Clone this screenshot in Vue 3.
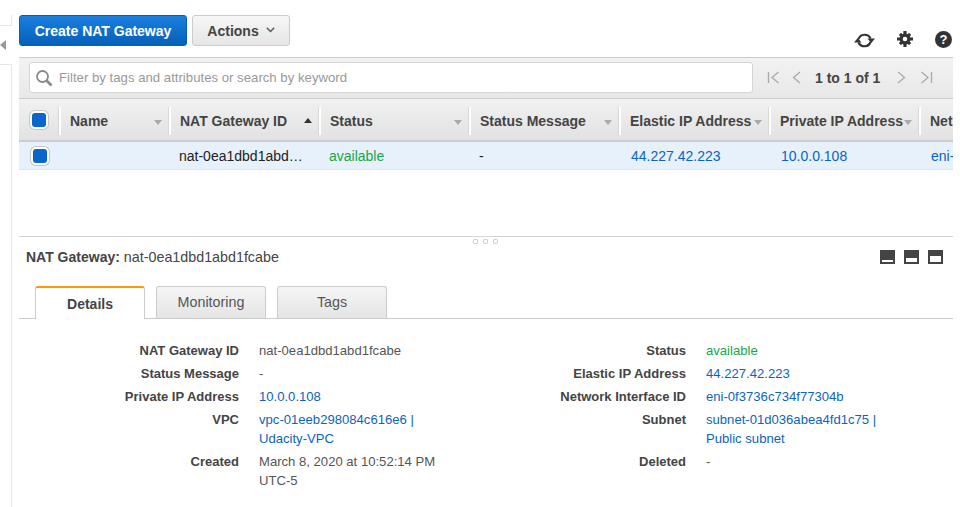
<script setup>
const columns = [
  { label: 'Name', width: 110, sort: 'down' },
  { label: 'NAT Gateway ID', width: 150, sort: 'up' },
  { label: 'Status', width: 150, sort: 'down' },
  { label: 'Status Message', width: 150, sort: 'down' },
  { label: 'Elastic IP Address', width: 150, sort: 'down' },
  { label: 'Private IP Address', width: 150, sort: 'down' },
  { label: 'Net', width: 34, sort: 'none' }
]
const left = [
  { k: 'NAT Gateway ID', v: ['nat-0ea1dbd1abd1fcabe'] },
  { k: 'Status Message', v: ['-'] },
  { k: 'Private IP Address', v: ['10.0.0.108'], link: true },
  { k: 'VPC', v: ['vpc-01eeb298084c616e6 |', 'Udacity-VPC'], link: true },
  { k: 'Created', v: ['March 8, 2020 at 10:52:14 PM', 'UTC-5'] }
]
const right = [
  { k: 'Status', v: ['available'], green: true },
  { k: 'Elastic IP Address', v: ['44.227.42.223'], link: true },
  { k: 'Network Interface ID', v: ['eni-0f3736c734f77304b'], link: true },
  { k: 'Subnet', v: ['subnet-01d036abea4fd1c75 |', 'Public subnet'], link: true },
  { k: 'Deleted', v: ['-'] }
]
</script>

<template>
  <div class="page">
    <aside class="rail">
      <div class="rail-top"></div>
      <div class="rail-arrow"></div>
      <div class="rail-rest"></div>
    </aside>
    <main class="main">
      <div class="toolbar">
        <button class="btn primary">Create NAT Gateway</button>
        <button class="btn secondary">Actions<svg width="9" height="6" viewBox="0 0 9 6" class="caret"><path d="M.8.8 4.5 4.6 8.2.8" fill="none" stroke="#555" stroke-width="1.4"/></svg></button>
        <div class="tools">
          <svg width="21" height="17" viewBox="0 0 21 17">
            <path d="M4.500 7a6.500 6.500 0 0 1 12-.5" fill="none" stroke="#333" stroke-width="2.200"/>
            <path d="M16.500 10a6.500 6.500 0 0 1-12 .5" fill="none" stroke="#333" stroke-width="2.200"/>
            <path d="M13.500 6.500h7.500l-3.700 4.500zM0 10.500h7.500L3.700 6z" fill="#333"/>
          </svg>
          <svg width="16" height="16" viewBox="0 0 16 16">
            <circle cx="8" cy="8" r="3.900" fill="none" stroke="#333" stroke-width="3.200"/>
            <path d="M6.400 0h3.200v3H6.400zM6.400 13h3.200v3H6.400zM0 6.400h3v3.200H0zM13 6.400h3v3.200h-3z" fill="#333"/>
            <path d="M1.800 4 4 1.800 6 4 4 6zM12 1.800 14.200 4 12 6 10 4zM1.800 12 4 10l2 2-2 2.200zM12 10l2.200 2L12 14.200 10 12z" fill="#333"/>
          </svg>
          <span class="help">?</span>
        </div>
      </div>

      <div class="filterbar">
        <div class="search">
          <svg width="18" height="18" viewBox="0 0 18 18">
            <circle cx="7.500" cy="7.500" r="5.500" fill="none" stroke="#888" stroke-width="1.800"/>
            <path d="m11.500 11.500 5 5" stroke="#888" stroke-width="2.600"/>
          </svg>
          <span>Filter by tags and attributes or search by keyword</span>
        </div>
        <div class="pager">
          <svg width="13" height="13" viewBox="0 0 13 13" class="pg1"><path d="M1.500 1v11M11.500 1 5 6.500l6.500 5.500" fill="none" stroke="#aaa" stroke-width="1.300"/></svg>
          <svg width="9" height="13" viewBox="0 0 9 13" class="pg2"><path d="M8 1 1.500 6.500 8 12" fill="none" stroke="#aaa" stroke-width="1.300"/></svg>
          <span class="pg-text">1 to 1 of 1</span>
          <svg width="9" height="13" viewBox="0 0 9 13" class="pg3"><path d="m1 1 6.500 5.500L1 12" fill="none" stroke="#aaa" stroke-width="1.300"/></svg>
          <svg width="13" height="13" viewBox="0 0 13 13" class="pg4"><path d="M11.500 1v11M1.500 1 8 6.500 1.500 12" fill="none" stroke="#aaa" stroke-width="1.300"/></svg>
        </div>
      </div>

      <div class="thead">
        <div class="check-cell"><span class="check"></span></div>
        <div v-for="c in columns" :key="c.label" class="th" :style="{ flexBasis: c.width + 'px' }">
          <span class="th-label">{{ c.label }}</span>
          <span v-if="c.sort !== 'none'" class="sort" :class="c.sort"></span>
        </div>
      </div>
      <div class="trow">
        <div class="check-cell"><span class="check"></span></div>
        <div class="td" style="flex-basis: 110px"></div>
        <div class="td" style="flex-basis: 150px">nat-0ea1dbd1abd…</div>
        <div class="td green" style="flex-basis: 150px">available</div>
        <div class="td" style="flex-basis: 150px">-</div>
        <div class="td link far" style="flex-basis: 150px">44.227.42.223</div>
        <div class="td link far" style="flex-basis: 150px">10.0.0.108</div>
        <div class="td link far" style="flex-basis: 34px">eni-</div>
      </div>

      <div class="split">
        <div class="sash"><i></i><i></i><i></i></div>
        <div class="pane-head">
          <div class="pane-title"><b>NAT Gateway:</b> nat-0ea1dbd1abd1fcabe</div>
          <div class="pane-icons">
            <span class="pi p1"></span><span class="pi p2"></span><span class="pi p3"></span>
          </div>
        </div>
        <div class="tabs">
          <div class="tab active">Details</div>
          <div class="tab">Monitoring</div>
          <div class="tab">Tags</div>
        </div>
        <div class="details">
          <dl class="col">
            <div v-for="r in left" :key="r.k" class="dr">
              <dt>{{ r.k }}</dt>
              <dd :class="{ link: r.link }"><div v-for="l in r.v" :key="l">{{ l }}</div></dd>
            </div>
          </dl>
          <dl class="col col-r">
            <div v-for="r in right" :key="r.k" class="dr">
              <dt>{{ r.k }}</dt>
              <dd :class="{ link: r.link, green: r.green }"><div v-for="l in r.v" :key="l">{{ l }}</div></dd>
            </div>
          </dl>
        </div>
      </div>
    </main>
  </div>
</template>

<style>
html, body { margin: 0; background: #fff; overflow: hidden; }
</style>

<style scoped>
* { box-sizing: border-box; }
.page {
  display: flex;
  width: 960px;
  height: 507px;
  overflow: hidden;
  font-family: "Liberation Sans", Arial, sans-serif;
  font-size: 13px;
  color: #444;
}
.rail { width: 12px; flex: none; margin-right: 7px; display: flex; flex-direction: column; }
.rail-top { margin-top: 15px; height: 11px; border-right: 1px solid #e6e6e6; border-bottom: 1px solid #e6e6e6; }
.rail-arrow { height: 38px; display: flex; align-items: flex-start; padding-top: 14px; }
.rail-arrow::before { content: ""; display: block; width: 0; height: 0; border-top: 5.500px solid transparent; border-bottom: 5.500px solid transparent; border-right: 6px solid #999; }
.rail-rest { flex: 1; border-top: 1px solid #e6e6e6; border-right: 1px solid #e6e6e6; }
.main { width: 934px; flex: none; }
.toolbar { height: 57px; display: flex; align-items: flex-start; padding-top: 15px; gap: 5px; }
.btn { height: 31px; border-radius: 3px; font: bold 14px "Liberation Sans", Arial, sans-serif; padding: 0; }
.primary { width: 168px; color: #fff; border: 1px solid #0b5fb0; background: linear-gradient(#1a7fe0, #0560b8); }
.secondary { width: 98px; color: #444; border: 1px solid #ccc; background: linear-gradient(#f6f6f6, #e6e6e6); display: flex; align-items: center; justify-content: center; gap: 7px; }
.caret { margin-top: -1px; }
.tools { margin-left: auto; display: flex; align-items: center; padding-top: 17px; height: 33px; }
.tools svg:nth-child(1) { margin-right: 22px; }
.tools svg:nth-child(2) { margin-right: 22px; margin-top: -2px; }
.help { width: 17px; height: 17px; margin-right: 1px; margin-top: -2px; border-radius: 50%; background: #333; color: #fff; font-weight: bold; font-size: 13px; line-height: 17px; text-align: center; }
.filterbar {
  height: 42px;
  background: linear-gradient(#f2f2f2, #e8e8e8);
  border-top: 1px solid #ccc;
  border-bottom: 1px solid #ccc;
  display: flex;
  align-items: flex-start;
  padding: 4px 0 0 10px;
}
.search {
  width: 724px; height: 31px; background: #fff;
  border: 1px solid #d5d5d5; border-radius: 3px;
  display: flex; align-items: center; gap: 6px; padding-left: 5px;
  color: #999; font-size: 13.200px;
}
.pager { display: flex; align-items: center; height: 31px; }
.pg1 { margin-left: 14px; }
.pg2 { margin-left: 12px; }
.pg-text { margin-left: 14px; font-weight: bold; font-size: 14px; color: #444; }
.pg3 { margin-left: 17px; }
.pg4 { margin-left: 14px; }
.thead { height: 43px; display: flex; background: linear-gradient(#f1f1f1, #e2e2e2); border-bottom: 2px solid #ccc; overflow: hidden; align-items: center; }
.check-cell { width: 40px; flex: none; display: flex; justify-content: center; padding-left: 1px; }
.thead .check-cell { padding-left: 0; margin-top: 1px; }
.check { width: 14px; height: 14px; margin: 2px 0; border-radius: 3px; background: #0a66c8; box-shadow: 0 0 0 2px #fff, 0 0 0 3px #c8c8c8; }
.th { flex: 0 0 150px; height: 28px; margin-top: 3px; border-left: 2px solid #fff; box-shadow: -1px 0 0 #d8d8d8; display: flex; align-items: center; position: relative; padding-left: 9px; font-weight: bold; font-size: 14px; white-space: nowrap; }
.sort { position: absolute; right: 7px; top: 13px; border: 4px solid transparent; border-top: 5px solid #aaa; border-bottom: 0; }
.sort.up { border-top: 0; border-bottom: 5px solid #333; top: 11px; }
.trow { height: 28px; display: flex; align-items: center; background: #e7f1fc; border-bottom: 1px solid #dde6ef; overflow: hidden; color: #222; font-size: 14px; white-space: nowrap; }
.td { flex: 0 0 150px; padding-left: 10px; overflow: hidden; }
.td.far { padding-left: 12px; }
.green { color: #14a848; }
.link { color: #0b63c1; }
.split { margin-top: 66px; border-top: 1px solid #d4d4d4; position: relative; }
.sash { position: absolute; top: 2px; left: 454px; display: flex; gap: 5px; }
.sash i { width: 5px; height: 5px; border: 1px solid #c8c8c8; border-radius: 1.500px; }
.pane-head { height: 39px; display: flex; align-items: center; justify-content: space-between; padding: 0 10px 0 7px; }
.pane-title { font-size: 14.300px; color: #444; white-space: nowrap; }
.pane-title b { font-size: 14px; }
.pane-icons { display: flex; gap: 9px; }
.pi { width: 15px; height: 14px; background: #444; position: relative; }
.pi::after { content: ""; position: absolute; left: 2px; right: 2px; bottom: 2px; background: #fff; }
.p1::after { height: 2px; }
.p2::after { height: 4px; }
.p3::after { height: 6px; }
.tabs { height: 35px; border-bottom: 1px solid #ccc; display: flex; align-items: flex-end; gap: 11px; padding-left: 16px; margin-top: 8px; }
.tab { width: 110px; height: 32px; border: 1px solid #ccc; border-bottom: 0; border-radius: 3px 3px 0 0; background: linear-gradient(#f5f5f5, #e5e5e5); text-align: center; line-height: 30px; font-size: 14.300px; color: #555; }
.tab.active { height: 33px; margin-bottom: -1px; background: #fff; border-top: 2px solid #f90; font-weight: bold; font-size: 14px; color: #444; line-height: 32px; }
.details { display: flex; padding-top: 22px; }
.col { width: 420px; margin: 0; }
.col-r { width: 448px; margin-left: 27px; }
.dr { display: flex; margin-bottom: 4px; }
dt { width: 220px; flex: none; text-align: right; font-weight: bold; font-size: 13px; color: #444; line-height: 19px; }
dd { margin: 0 0 0 20px; line-height: 19px; font-size: 13.100px; white-space: nowrap; color: #555; }
dd.link { color: #0b63c1; }
dd.green { color: #14a848; }
</style>
